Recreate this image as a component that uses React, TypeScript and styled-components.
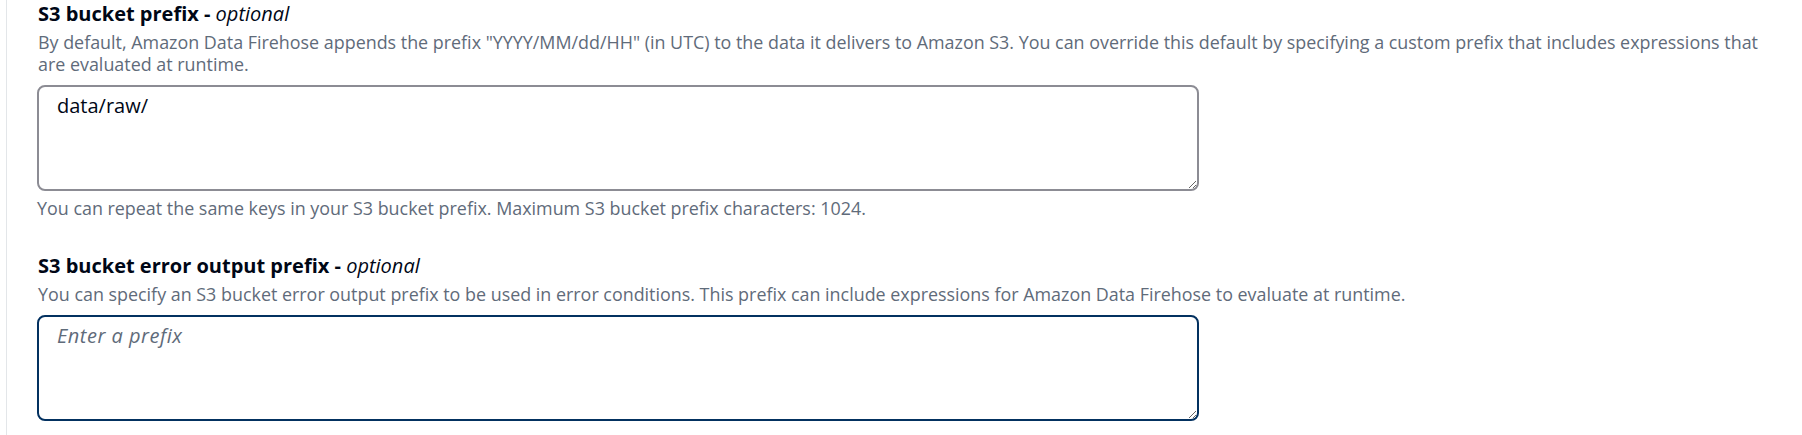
import React from "react";
import styled, { createGlobalStyle } from "styled-components";

const GlobalStyle = createGlobalStyle`
  html, body {
    margin: 0;
    padding: 0;
    background: #ffffff;
  }
  body {
    font-family: "Open Sans", "Noto Sans", sans-serif;
    color: #000716;
  }
`;

const Panel = styled.div`
  margin-left: 6px;
  border-left: 1px solid #e3e6e9;
  padding: 2px 0 14px 30px;
  display: flex;
  flex-direction: column;
  gap: 35px;
  min-height: 435px;
  box-sizing: border-box;
`;

const Field = styled.div`
  display: flex;
  flex-direction: column;
`;

const Label = styled.div`
  font-size: 20px;
  line-height: 24px;
  font-weight: 700;
  color: #000716;
  padding-left: 1px;
`;

const Optional = styled.i`
  font-weight: 400;
  font-style: italic;
`;

const Description = styled.div`
  margin-top: 5px;
  max-width: 1735px;
  font-size: 17.9px;
  line-height: 22px;
  color: #5f6b7a;
  padding-left: 1px;
`;

const Area = styled.textarea<{ $focused?: boolean }>`
  margin-top: 10px;
  width: 1162px;
  height: 106px;
  box-sizing: border-box;
  border: 2px solid ${(p) => (p.$focused ? "#033160" : "#8c8c94")};
  border-radius: 8px;
  padding: 7px 18px;
  font-family: "Open Sans", "Noto Sans", sans-serif;
  font-size: 20px;
  line-height: 24px;
  color: #000716;
  background: #ffffff;
  outline: none;
  resize: vertical;
  caret-color: #000716;
  &::placeholder {
    color: #5f6b7a;
    font-style: italic;
    letter-spacing: 0.5px;
  }
`;

const Constraint = styled.div`
  margin-top: 6px;
  font-size: 17.9px;
  line-height: 22px;
  color: #5f6b7a;
`;

export default function App() {
  return (
    <>
      <GlobalStyle />
      <Panel>
        <Field>
          <Label>
            S3 bucket prefix - <Optional>optional</Optional>
          </Label>
          <Description>
            By default, Amazon Data Firehose appends the prefix "YYYY/MM/dd/HH" (in UTC) to the data it
            delivers to Amazon S3. You can override this default by specifying a custom prefix that
            includes expressions that are evaluated at runtime.
          </Description>
          <Area defaultValue="data/raw/" />
          <Constraint>
            You can repeat the same keys in your S3 bucket prefix. Maximum S3 bucket prefix characters: 1024.
          </Constraint>
        </Field>
        <Field>
          <Label>
            S3 bucket error output prefix - <Optional>optional</Optional>
          </Label>
          <Description>
            You can specify an S3 bucket error output prefix to be used in error conditions. This prefix can
            include expressions for Amazon Data Firehose to evaluate at runtime.
          </Description>
          <Area $focused autoFocus placeholder="Enter a prefix" />
        </Field>
      </Panel>
    </>
  );
}
